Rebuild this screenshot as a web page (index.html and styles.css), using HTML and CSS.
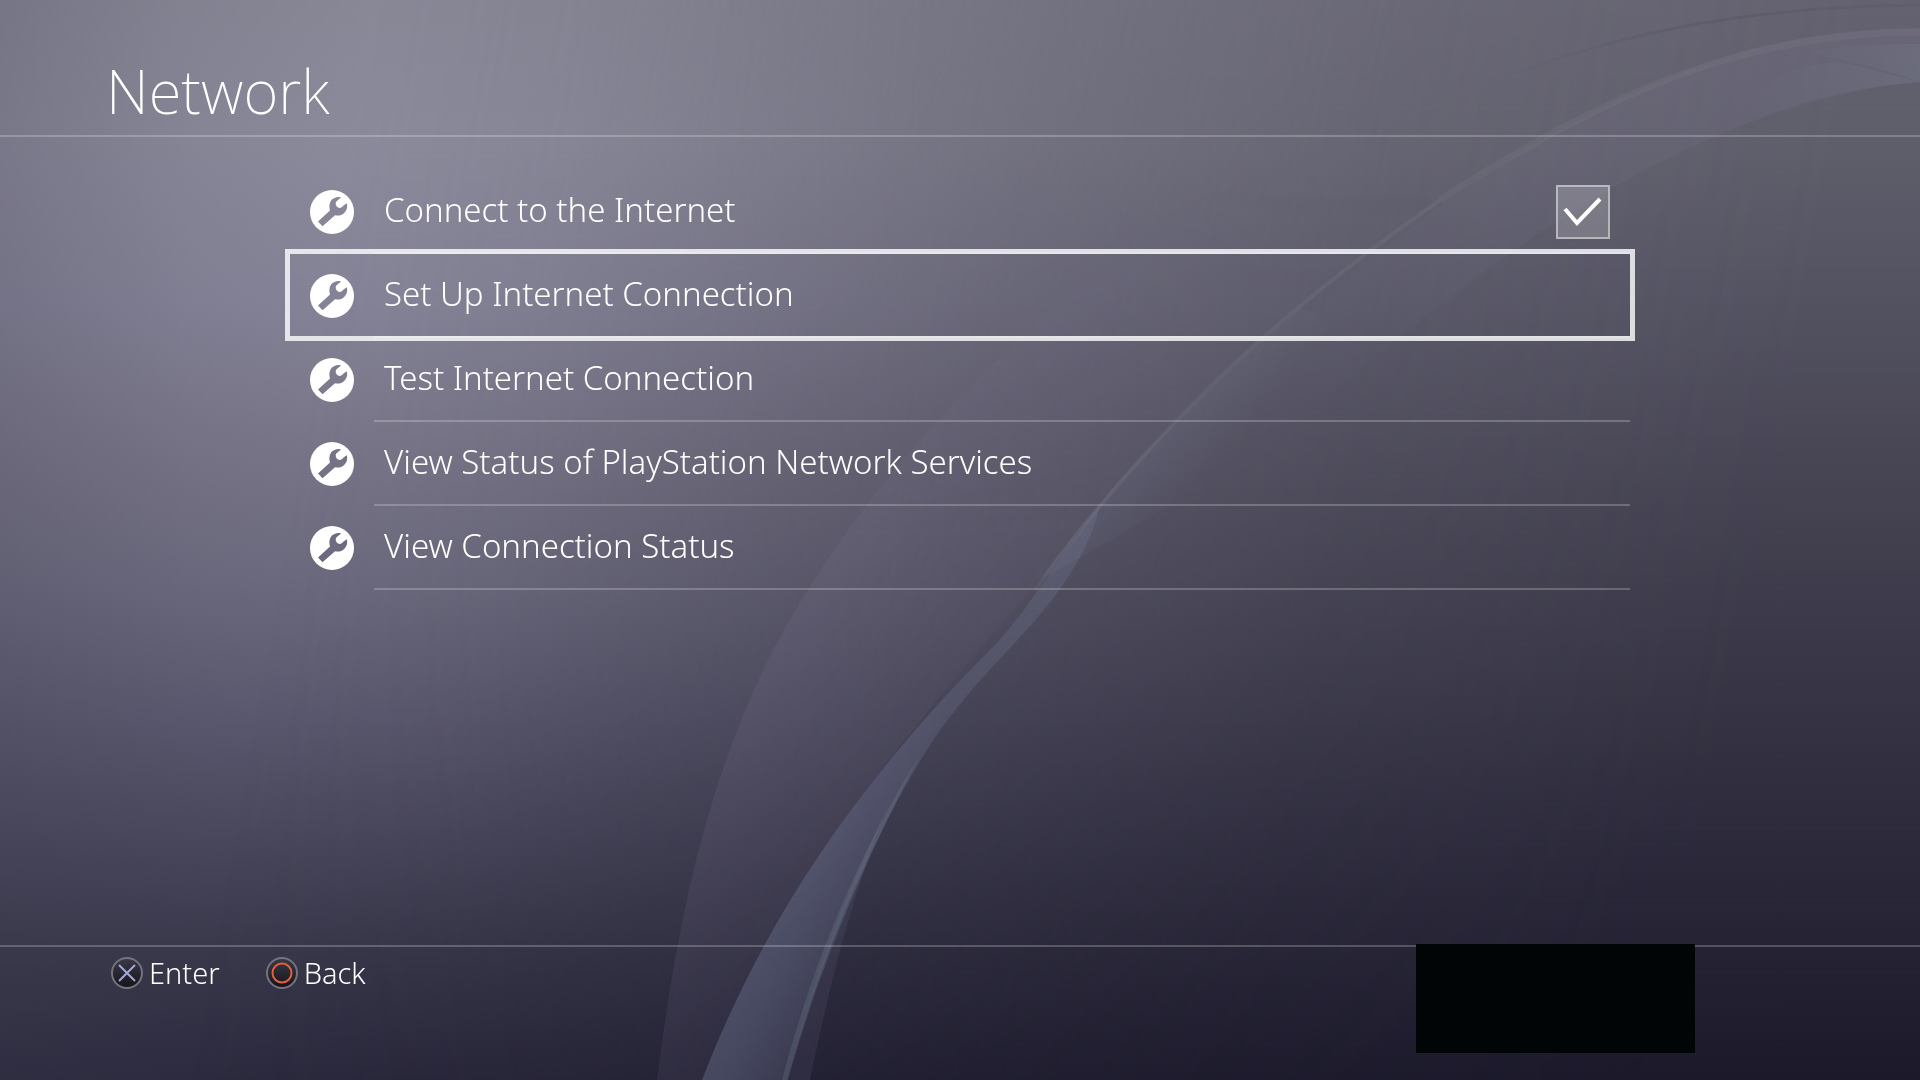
FILE: index.html
```html
<!DOCTYPE html>
<html lang="en">
<head>
    <meta charset="UTF-8">
    <meta name="viewport" content="width=device-width, initial-scale=1.0">
    <title>Network</title>
    <link rel="stylesheet" href="styles.css">
</head>
<body>
    <svg class="symbols" aria-hidden="true">
        <symbol id="wrench" viewBox="0 0 44 44">
            <mask id="wrenchCut">
                <rect width="44" height="44" fill="#fff"/>
                <path d="M8 31.500 L20 20.500 C18.500 15 20 10 24 8.300 C26.500 7 29 6.600 31 7.400 L26.300 11.600 C25 13.500 26 16.500 28 17.500 C30 18.500 32 17.500 33.500 15.500 L36.800 13.200 C38 17 36.500 21.500 33 24 C30.500 25.800 27.500 25.800 25 25.200 L12.500 36.200 Z" fill="#000"/>
            </mask>
            <circle cx="22" cy="22" r="22" fill="#fff" mask="url(#wrenchCut)"/>
        </symbol>
    </svg>

    <div class="backdrop">
        <svg class="waves" viewBox="0 0 1920 1080" preserveAspectRatio="none" aria-hidden="true">
            <defs>
                <linearGradient id="veil" gradientUnits="userSpaceOnUse" x1="720" y1="640" x2="1000" y2="780">
                    <stop offset="0" stop-color="#8a80a0" stop-opacity="0.17"/>
                    <stop offset="1" stop-color="#8a80a0" stop-opacity="0.04"/>
                </linearGradient>
                <linearGradient id="veilFade" gradientUnits="userSpaceOnUse" x1="0" y1="1080" x2="0" y2="180">
                    <stop offset="0" stop-color="#fff"/>
                    <stop offset="0.6" stop-color="#fff"/>
                    <stop offset="1" stop-color="#000"/>
                </linearGradient>
                <mask id="veilMask"><rect width="1920" height="1080" fill="url(#veilFade)"/></mask>
                <linearGradient id="blade" gradientUnits="userSpaceOnUse" x1="740" y1="940" x2="840" y2="980">
                    <stop offset="0" stop-color="#7880a0" stop-opacity="0.44"/>
                    <stop offset="0.4" stop-color="#7880a0" stop-opacity="0.38"/>
                    <stop offset="1" stop-color="#7880a0" stop-opacity="0.24"/>
                </linearGradient>
                <linearGradient id="ribbon" gradientUnits="userSpaceOnUse" x1="1160" y1="430" x2="1210" y2="472">
                    <stop offset="0" stop-color="#7a86a4" stop-opacity="0.14"/>
                    <stop offset="1" stop-color="#7a86a4" stop-opacity="0"/>
                </linearGradient>
                <linearGradient id="crest" gradientUnits="userSpaceOnUse" x1="1300" y1="380" x2="1920" y2="40">
                    <stop offset="0" stop-color="#8480a0" stop-opacity="0"/>
                    <stop offset="0.4" stop-color="#8480a0" stop-opacity="0.09"/>
                    <stop offset="1" stop-color="#8480a0" stop-opacity="0.15"/>
                </linearGradient>
                <linearGradient id="lens" x1="0" y1="0" x2="1" y2="0">
                    <stop offset="0" stop-color="#8496a8" stop-opacity="0"/>
                    <stop offset="1" stop-color="#8496a8" stop-opacity="0.14"/>
                </linearGradient>
                <linearGradient id="shade" gradientUnits="userSpaceOnUse" x1="1480" y1="0" x2="1920" y2="0">
                    <stop offset="0" stop-color="#4c4858" stop-opacity="0"/>
                    <stop offset="0.5" stop-color="#4c4858" stop-opacity="0.25"/>
                    <stop offset="1" stop-color="#4c4858" stop-opacity="0.15"/>
                </linearGradient>
            </defs>
            <path mask="url(#veilMask)" fill="url(#veil)" d="M657 1080 C680 900 710 780 768 660 C850 500 1010 310 1250 170 L1440 200 C1300 290 1150 440 1057 560 C900 740 780 880 702 1080 Z"/>
            <path fill="url(#crest)" d="M1300 325 C1420 210 1560 110 1740 52 C1800 36 1860 28 1920 28 L1920 82 C1790 92 1640 160 1500 260 C1430 310 1350 375 1300 425 Z"/>
            <path fill="url(#ribbon)" d="M1040 580 C1110 480 1200 395 1300 308 L1400 345 C1280 440 1150 520 1040 580 Z"/>
            <path fill="url(#blade)" d="M702 1080 C760 930 850 790 990 650 C1025 615 1050 570 1100 505 C1090 550 1060 595 1020 637 C985 675 960 700 930 745 C870 840 820 960 787 1080 Z"/>
            <path fill="#7a7494" fill-opacity="0.15" d="M787 1080 C812 980 850 885 890 800 C850 900 830 985 810 1080 Z"/>
            <path fill="#8494a4" fill-opacity="0.2" d="M782 1080 C812 965 860 850 920 755 C870 850 820 965 788 1080 Z"/>
            <path fill="none" stroke="#98969e" stroke-opacity="0.14" stroke-width="4" d="M1035 590 C1140 445 1260 325 1440 200"/>
            <path fill="none" stroke="#98969e" stroke-opacity="0.12" stroke-width="7" d="M1440 200 C1610 90 1750 32 1920 32"/>
            <path fill="none" stroke="url(#shade)" stroke-width="3" d="M1480 86 C1620 30 1760 6 1920 5"/>
            <path fill="url(#lens)" d="M1740 110 C1780 66 1820 60 1850 64 L1920 82 C1860 86 1800 100 1740 125 Z"/>
            <path fill="url(#lens)" d="M1800 52 C1840 46 1880 44 1920 44 L1920 82 C1880 68 1850 60 1800 52 Z"/>
        </svg>
    </div>

    <div class="screen">
        <header class="header">
            <h1>Network</h1>
        </header>

        <main>
            <ul class="menu">
                <li>
                    <label class="item">
                        <svg class="icon"><use href="#wrench"/></svg>
                        <span class="text">Connect to the Internet</span>
                        <span class="check">
                            <input type="checkbox" checked>
                            <svg viewBox="0 0 54 54"><path d="M9 24 L21 38 L44 14" fill="none" stroke="#fff" stroke-width="4"/></svg>
                        </span>
                    </label>
                </li>
                <li>
                    <button class="item selected">
                        <svg class="icon"><use href="#wrench"/></svg>
                        <span class="text">Set Up Internet Connection</span>
                    </button>
                </li>
                <li>
                    <button class="item">
                        <svg class="icon"><use href="#wrench"/></svg>
                        <span class="text">Test Internet Connection</span>
                    </button>
                </li>
                <li>
                    <button class="item">
                        <svg class="icon"><use href="#wrench"/></svg>
                        <span class="text">View Status of PlayStation Network Services</span>
                    </button>
                </li>
                <li>
                    <button class="item">
                        <svg class="icon"><use href="#wrench"/></svg>
                        <span class="text">View Connection Status</span>
                    </button>
                </li>
            </ul>
        </main>

        <footer class="footer">
            <button class="hint">
                <svg class="pad" viewBox="0 0 32 32">
                    <defs>
                        <linearGradient id="padFill" x1="0" y1="0" x2="0" y2="1">
                            <stop offset="0" stop-color="#3c3a46"/>
                            <stop offset="1" stop-color="#15141c"/>
                        </linearGradient>
                    </defs>
                    <circle cx="16" cy="16" r="15" fill="url(#padFill)" stroke="#74737e" stroke-width="2"/>
                    <path d="M8 8 L24 24 M24 8 L8 24" stroke="#a3a9d4" stroke-width="2"/>
                </svg>
                Enter
            </button>
            <button class="hint">
                <svg class="pad" viewBox="0 0 32 32">
                    <circle cx="16" cy="16" r="15" fill="url(#padFill)" stroke="#74737e" stroke-width="2"/>
                    <circle cx="16" cy="16" r="9.500" fill="none" stroke="#e0603f" stroke-width="2"/>
                </svg>
                Back
            </button>
            <div class="cover"></div>
        </footer>
    </div>
</body>
</html>
```
FILE: styles.css
```css
* {
    box-sizing: border-box;
}
body {
    margin: 0;
    font-family: "Noto Sans", "Open Sans", sans-serif;
    font-weight: 300;
    color: #fff;
    background-color: #2b2938;
}
.symbols {
    position: absolute;
    width: 0;
    height: 0;
}

/* background */
.backdrop {
    position: fixed;
    inset: 0;
    z-index: -1;
    background: linear-gradient(#888897 0%, #8c8b9c 13%, #868498 28%, #797689 42%, #6d6b7f 54%, #5c5a70 66%, #4b495e 77%, #39384b 88%, #2b293d 100%);
}
.backdrop::before,
.backdrop::after {
    content: "";
    position: absolute;
    inset: 0;
}
.backdrop::before {
    background: linear-gradient(#646270 0%, #5e5d6a 14%, #535261 28%, #454352 46%, #373545 64%, #2a2839 80%, #1b192a 100%);
    -webkit-mask-image: linear-gradient(100deg, transparent 18%, rgba(0, 0, 0, 0.12) 28%, rgba(0, 0, 0, 0.57) 50%, rgba(0, 0, 0, 0.85) 68%, #000 88%);
    mask-image: linear-gradient(100deg, transparent 18%, rgba(0, 0, 0, 0.12) 28%, rgba(0, 0, 0, 0.57) 50%, rgba(0, 0, 0, 0.85) 68%, #000 88%);
}
.backdrop::after {
    background: linear-gradient(90deg, rgba(60, 58, 76, 0.24), rgba(60, 58, 76, 0.08) 10%, rgba(60, 58, 76, 0) 20%);
}
.waves {
    position: relative;
    z-index: 1;
    display: block;
    width: 100%;
    height: 100%;
}

.screen {
    display: flex;
    flex-direction: column;
    min-height: 100vh;
}
.header {
    padding: 50px 106px 3px;
    border-bottom: 2px solid rgba(255, 255, 255, 0.22);
}
.header h1 {
    margin: 0;
    font-size: 60px;
    font-weight: 200;
    line-height: 82px;
}
main {
    flex: 1;
    padding: 33px 15%;
}

/* menu list */
.menu {
    margin: 0 2px;
    padding: 0;
    list-style: none;
}
.menu li::after {
    content: "";
    display: block;
    height: 2px;
    margin-left: 84px;
    background-color: rgba(255, 255, 255, 0.22);
}
.item {
    display: flex;
    align-items: center;
    width: 100%;
    height: 82px;
    padding: 2px 20px 0;
    border: none;
    background: none;
    color: inherit;
    font: inherit;
    font-size: 33px;
    text-align: left;
    cursor: pointer;
}
.item.selected {
    outline: 5px solid rgba(255, 255, 255, 0.8);
}
.icon {
    flex: none;
    width: 44px;
    height: 44px;
    margin-right: 30px;
}
.text {
    flex: 1;
    padding-bottom: 4px;
    line-height: 46px;
}
.check {
    display: grid;
}
.check input,
.check svg {
    grid-area: 1 / 1;
    width: 54px;
    height: 54px;
    margin: 0;
}
.check input {
    appearance: none;
    border: 2px solid rgba(255, 255, 255, 0.45);
    background-color: rgba(255, 255, 255, 0.18);
}
.check svg {
    pointer-events: none;
    visibility: hidden;
}
.check input:checked + svg {
    visibility: visible;
}

/* button hints */
.footer {
    position: relative;
    display: flex;
    align-items: flex-start;
    gap: 46px;
    height: 135px;
    padding: 4px 111px;
    border-top: 2px solid rgba(255, 255, 255, 0.22);
}
.hint {
    display: flex;
    align-items: center;
    gap: 6px;
    padding: 0;
    border: none;
    background: none;
    color: inherit;
    font: inherit;
    font-size: 29px;
    line-height: 43px;
    cursor: pointer;
}
.pad {
    width: 32px;
    height: 32px;
}
.cover {
    position: absolute;
    top: -3px;
    right: 225px;
    width: 279px;
    height: 109px;
    background-color: #020506;
}
```
